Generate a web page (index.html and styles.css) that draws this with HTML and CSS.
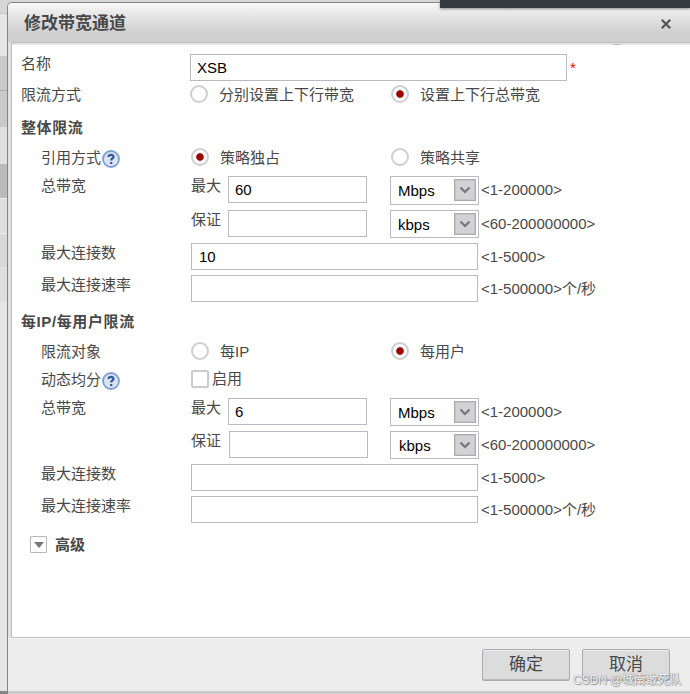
FILE: index.html
```html
<!DOCTYPE html>
<html lang="zh-CN">
<head>
<meta charset="utf-8">
<title>修改带宽通道</title>
<link rel="stylesheet" href="styles.css">
</head>
<body>
<div class="backdrop"></div>
<section class="dialog">
  <header class="titlebar">
    <h1>修改带宽通道</h1>
    <svg class="close" width="12" height="12" viewBox="0 0 12 12"><path d="M1.8 1.8l8.4 8.4M10.2 1.8l-8.4 8.4"/></svg>
  </header>
  <main class="form">
    <div class="row name"><label class="label">名称</label><div class="input long">XSB</div><span class="required">*</span></div>
    <div class="row mode"><label class="label">限流方式</label><span class="option first"><i class="radio"></i>分别设置上下行带宽</span><span class="option"><i class="radio on"></i>设置上下行总带宽</span></div>
    <h2>整体限流</h2>
    <div class="row indent reference"><label class="label">引用方式<svg class="help" width="18" height="18" viewBox="0 0 18 18"><circle cx="9" cy="9" r="8"/><path d="M6.4 7.1C6.4 4 11.7 4.2 11.5 6.9C11.4 8.5 9.2 8.5 9.2 10.4M9.2 12v2"/></svg></label><span class="option first"><i class="radio on"></i>策略独占</span><span class="option"><i class="radio"></i>策略共享</span></div>
    <div class="row indent max"><label class="label">总带宽</label><span class="bound">最大</span><div class="input short">60</div><div class="select">Mbps<b><svg width="12" height="8" viewBox="0 0 12 8"><path d="M1.5 1.5L6 6l4.5-4.5"/></svg></b></div><span class="range">&lt;1-200000&gt;</span></div>
    <div class="row indent min"><label class="label"></label><span class="bound">保证</span><div class="input short"></div><div class="select">kbps<b><svg width="12" height="8" viewBox="0 0 12 8"><path d="M1.5 1.5L6 6l4.5-4.5"/></svg></b></div><span class="range">&lt;60-200000000&gt;</span></div>
    <div class="row indent count"><label class="label">最大连接数</label><div class="input medium">10</div><span class="range">&lt;1-5000&gt;</span></div>
    <div class="row indent rate"><label class="label">最大连接速率</label><div class="input medium"></div><span class="range">&lt;1-500000&gt;个/秒</span></div>
    <h2>每IP/每用户限流</h2>
    <div class="row indent target"><label class="label">限流对象</label><span class="option first"><i class="radio"></i>每IP</span><span class="option"><i class="radio on"></i>每用户</span></div>
    <div class="row indent dynamic"><label class="label">动态均分<svg class="help" width="18" height="18" viewBox="0 0 18 18"><circle cx="9" cy="9" r="8"/><path d="M6.4 7.1C6.4 4 11.7 4.2 11.5 6.9C11.4 8.5 9.2 8.5 9.2 10.4M9.2 12v2"/></svg></label><span class="check"><i class="checkbox"></i>启用</span></div>
    <div class="row indent user-max"><label class="label">总带宽</label><span class="bound">最大</span><div class="input short">6</div><div class="select">Mbps<b><svg width="12" height="8" viewBox="0 0 12 8"><path d="M1.5 1.5L6 6l4.5-4.5"/></svg></b></div><span class="range">&lt;1-200000&gt;</span></div>
    <div class="row indent user-min"><label class="label"></label><span class="bound">保证</span><div class="input short"></div><div class="select">kbps<b><svg width="12" height="8" viewBox="0 0 12 8"><path d="M1.5 1.5L6 6l4.5-4.5"/></svg></b></div><span class="range">&lt;60-200000000&gt;</span></div>
    <div class="row indent count"><label class="label">最大连接数</label><div class="input medium"></div><span class="range">&lt;1-5000&gt;</span></div>
    <div class="row indent last"><label class="label">最大连接速率</label><div class="input medium"></div><span class="range">&lt;1-500000&gt;个/秒</span></div>
    <div class="advanced"><i class="toggle"><svg width="10" height="6" viewBox="0 0 10 6"><path d="M0 0h10L5 6z"/></svg></i>高级</div>
  </main>
  <footer class="footer"><div class="button">确定</div><div class="button">取消</div></footer>
</section>
<div class="page-bar"></div>
<div class="sliver"></div>
<div class="watermark">CSDN @城南敢死队</div>
</body>
</html>
```
FILE: styles.css
```css
* { box-sizing: border-box; }
body {
  margin: 0;
  width: 690px;
  height: 694px;
  overflow: hidden;
  position: relative;
  display: flex;
  background: #d6d6d6;
  color: #484848;
  font: 15px/20px "Liberation Sans", "Noto Sans CJK SC", sans-serif;
}
.backdrop {
  width: 7px;
  flex: none;
  background: linear-gradient(#d6d6d6 0 13px, #c8c8c8 13px 14px, #e5e5e5 14px 56px, #c9c9c9 56px 90px, #aaa 90px 91px, #c9c9c9 91px 127px, #e0e0e0 127px 164px, #bbbbbd 164px 198px, #eee 198px 199px, #dedede 199px 233px, #eee 233px 234px, #d8d8d8 234px 267px, #e8e8e8 267px 268px, #dedede 268px 302px, #e5e5e5 302px 691px, #858585 691px);
}
.dialog {
  width: 683px;
  height: 692px;
  margin-top: 2px;
  border: solid #858585;
  border-width: 1px 0 0 1px;
  border-radius: 5px 0 0 0;
  background: #e2e2e2;
  overflow: hidden;
  display: flex;
  flex-direction: column;
}
.titlebar {
  height: 39px;
  flex: none;
  display: flex;
  justify-content: space-between;
  align-items: center;
  padding: 2px 18px 0 17px;
  background: linear-gradient(#f8f8f8, #e4e4e4 35%, #d0d0d0 75%, #cfcfcf);
}
.titlebar h1 {
  margin: 1px 0 0 -1px;
  font-size: 17px;
  line-height: 24px;
}
.close { fill: none; stroke: #555; stroke-width: 2.3; }
.form {
  height: 596px;
  flex: none;
  margin-left: 3px;
  border: 1px solid #bfbfbf;
  border-right: 0;
  padding: 11px 0 0 10px;
  background: #fff;
  box-shadow: inset 0 2px #e3e3e3;
}
.row { display: flex; align-items: flex-start; }
.label { width: 169px; flex: none; display: flex; line-height: 19px; margin-left: -1px; }
.name { height: 31px; }
.mode { height: 32px; }
.reference { height: 28px; }
.max { height: 34px; }
.min { height: 33px; }
.count { height: 32px; }
.rate { height: 36px; }
.target { height: 28px; }
.dynamic { height: 28px; }
.user-max, .user-min { height: 33px; }
.last { height: 39px; }
.indent { padding-left: 20px; }
.indent .label { width: 150px; }
h2 {
  margin: 0 0 0 -1px;
  height: 31px;
  font-size: 15px;
  line-height: 21px;
  letter-spacing: .6px;
}
.input {
  height: 27px;
  flex: none;
  border: 1px solid #babac0;
  background: #fff;
  color: #000;
  line-height: 26px;
  padding-left: 6px;
}
.long { width: 377px; }
.medium { width: 287px; padding-left: 7px; }
.short { width: 139px; }
.user-min .short { margin-left: 1px; }
.user-min .select { margin-left: 22px; padding-left: 8px; }
.required { color: #f00; margin: 4px 0 0 3px; }
.option { display: flex; width: 200px; line-height: 19px; }
.first { width: 201px; }
.indent .first { width: 200px; }
.radio {
  width: 18px;
  height: 18px;
  flex: none;
  margin-right: 11px;
  border: 2px solid #cecece;
  border-radius: 50%;
  background: #fff;
}
.on { background: radial-gradient(circle, #a00000 0 3.3px, #fff 4.3px); }
.help {
  margin: 2px 0 0 1px;
  fill: #d9e3f2;
  stroke: #809fd6;
  stroke-width: 1.8;
}
.help path { fill: none; stroke: #315994; stroke-width: 2.2; }
.bound { width: 37px; flex: none; line-height: 19px; }
.select {
  width: 89px;
  height: 29px;
  flex: none;
  display: flex;
  justify-content: space-between;
  margin-left: 23px;
  padding: 2px 2px 0 7px;
  border: 1px solid #babac0;
  color: #000;
  line-height: 23px;
}
.min .select, .user-max .select, .user-min .select { height: 28px; }
.select b {
  width: 22px;
  height: 22px;
  display: flex;
  align-items: center;
  justify-content: center;
  border: 1px solid #aaaab0;
  background: #d2d2d4;
  box-shadow: inset 0 0 0 1px #c6c6ca;
}
.select svg { fill: none; stroke: #77777a; stroke-width: 2.2; }
.range { margin-left: 2px; line-height: 28px; white-space: nowrap; }
.medium + .range { margin-left: 3px; }
.check { display: flex; line-height: 18px; }
.checkbox {
  width: 18px;
  height: 18px;
  margin-right: 3px;
  border: 2px solid #cbcbcf;
  border-radius: 2px;
}
.advanced {
  display: flex;
  align-items: center;
  padding-left: 8px;
  font-weight: bold;
  height: 20px;
}
.toggle {
  width: 17px;
  height: 17px;
  margin: -1px 8px 0 0;
  border: 1px solid #b8b8bc;
  border-radius: 1px;
  display: flex;
  align-items: center;
  justify-content: center;
}
.toggle path { fill: #77777b; }
.footer {
  height: 56px;
  flex: none;
  display: flex;
  justify-content: flex-end;
  gap: 12px;
  padding: 11px 20px 0 0;
  border-bottom: 3px solid #c9c9c9;
  background: #ededed;
  box-shadow: inset 0 1px #f8f8f8;
}
.button {
  width: 88px;
  height: 32px;
  border: 1px solid #aaaab0;
  border-radius: 2px;
  background: #dcdcdc;
  box-shadow: inset 0 1px #eee, inset 0 -1px #bbb;
  font-size: 17px;
  line-height: 30px;
  text-align: center;
}
.page-bar {
  position: absolute;
  left: 440px;
  top: 0;
  width: 250px;
  height: 8px;
  background: #343a3f;
  box-shadow: 0 1px 3px #888;
}
.sliver {
  position: absolute;
  left: 613px;
  top: 44px;
  width: 7px;
  height: 1px;
  background: #a5c5bc;
}
.watermark {
  position: absolute;
  left: 573px;
  top: 670px;
  font-size: 12px;
  letter-spacing: -.1px;
  line-height: 20px;
  white-space: nowrap;
  color: #f2f2f2;
  text-shadow: 0 0 1px #777, 1px 1px 1px #999;
}
```
